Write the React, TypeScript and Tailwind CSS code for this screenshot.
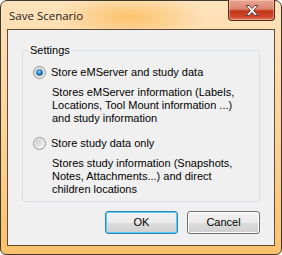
import React from "react";

function RadioOn() {
  return (
    <svg width="13" height="13" viewBox="0 0 13 13" className="shrink-0">
      <defs>
        <linearGradient id="r1bg" x1="0" y1="0" x2="1" y2="1">
          <stop offset="0" stopColor="#e6e6e6" />
          <stop offset="1" stopColor="#ffffff" />
        </linearGradient>
        <radialGradient id="r1dot" cx="0.45" cy="0.4" r="0.6">
          <stop offset="0" stopColor="#9fdcff" />
          <stop offset="0.45" stopColor="#2f8fd8" />
          <stop offset="1" stopColor="#0d4a7c" />
        </radialGradient>
      </defs>
      <circle cx="6.5" cy="6.5" r="6" fill="url(#r1bg)" stroke="#8d8f90" strokeWidth="1" />
      <circle cx="6.5" cy="6.5" r="4.3" fill="none" stroke="#c8cacb" strokeWidth="0.8" />
      <circle cx="6.5" cy="6.5" r="3.3" fill="url(#r1dot)" />
    </svg>
  );
}

function RadioOff() {
  return (
    <svg width="13" height="13" viewBox="0 0 13 13" className="shrink-0">
      <defs>
        <linearGradient id="r2bg" x1="0" y1="0" x2="1" y2="1">
          <stop offset="0" stopColor="#c9c9c9" />
          <stop offset="1" stopColor="#f7f7f7" />
        </linearGradient>
      </defs>
      <circle cx="6.5" cy="6.5" r="6" fill="#f4f4f4" stroke="#8d8f90" strokeWidth="1" />
      <circle cx="6.5" cy="6.5" r="4.5" fill="url(#r2bg)" />
    </svg>
  );
}

function CloseButton() {
  return (
    <div className="w-[47px] h-[21px] -mt-px rounded-b-[4px] border border-[#5b2a1f] border-t-0 bg-[linear-gradient(to_bottom,#e8a594_0%,#dc8670_45%,#c23517_55%,#cf4a2e_85%,#e47d5f_100%)] flex items-center justify-center shadow-[inset_0_0_0_1px_rgba(255,210,195,0.45)]">
      <svg width="16" height="13" viewBox="0 0 16 13">
        <path
          d="M2 1.5 L5.2 1.5 L8 4.6 L10.8 1.5 L14 1.5 L9.6 6.5 L14 11.5 L10.8 11.5 L8 8.4 L5.2 11.5 L2 11.5 L6.4 6.5 Z"
          fill="#ffffff"
          stroke="#5a2a22"
          strokeWidth="0.9"
          strokeLinejoin="round"
        />
      </svg>
    </div>
  );
}

function WinButton({ label, isDefault }: { label: string; isDefault?: boolean }) {
  return (
    <div
      className={
        isDefault
          ? "w-[73px] h-[23px] rounded-[3px] border border-[#3c7fb1] bg-[linear-gradient(to_bottom,#f2f2f2_0%,#ebebeb_50%,#dddddd_50%,#cfcfcf_100%)] shadow-[inset_0_0_0_1px_#48d2fc] flex items-center justify-center text-[11px] text-black"
          : "w-[73px] h-[23px] rounded-[3px] border border-[#707070] bg-[linear-gradient(to_bottom,#f2f2f2_0%,#ebebeb_50%,#dddddd_50%,#cfcfcf_100%)] shadow-[inset_0_0_0_1px_#fcfcfc] flex items-center justify-center text-[11px] text-black"
      }
    >
      {label}
    </div>
  );
}

export default function App() {
  return (
    <div className="w-[282px] h-[255px] bg-white">
      <div
        className="w-[282px] h-[255px] rounded-t-[7px] rounded-b-[6px] border border-[#3f3a30] flex flex-col px-[6px] pb-[8px] bg-[radial-gradient(ellipse_75px_22px_at_128px_16px,#fcc26c_0%,rgba(252,194,108,0)_100%),linear-gradient(to_bottom,#fde2bb_0%,#fdd8a2_35%,#fccd8a_70%,#fcc16a_100%)]"
        style={{ fontFamily: '"Liberation Sans", Arial, sans-serif' }}
      >
        <div className="h-[28px] flex items-start justify-between shrink-0">
          <div
            className="pl-[2px] pt-[7px] text-[11.5px] text-[#1a1a1a] leading-[16px]"
            style={{ fontFamily: '"Open Sans", "Noto Sans", sans-serif' }}
          >
            Save Scenario
          </div>
          <CloseButton />
        </div>
        <div className="flex-1 border border-[#5e4c38] bg-[#f0f0f0] flex flex-col px-[14px] pt-[14px]">
          <fieldset className="border border-[#d5dfe5] rounded-[3px] pb-[5px] text-[11px] leading-[13px] text-black">
            <legend className="ml-[5px] px-[2px]">Settings</legend>
            <div className="flex items-center gap-[5px] pl-[10px] mt-[9px]">
              <RadioOn />
              <span>Store eMServer and study data</span>
            </div>
            <div className="pl-[29px] mt-[7px]">
              Stores eMServer information (Labels,
              <br />
              Locations, Tool Mount information ...)
              <br />
              and study information
            </div>
            <div className="flex items-center gap-[5px] pl-[10px] mt-[12px]">
              <RadioOff />
              <span>Store study data only</span>
            </div>
            <div className="pl-[29px] mt-[7px]">
              Stores study information (Snapshots,
              <br />
              Notes, Attachments...) and direct
              <br />
              children locations
            </div>
          </fieldset>
          <div className="flex justify-end gap-[9px] mt-[9px]">
            <WinButton label="OK" isDefault />
            <WinButton label="Cancel" />
          </div>
        </div>
      </div>
    </div>
  );
}
